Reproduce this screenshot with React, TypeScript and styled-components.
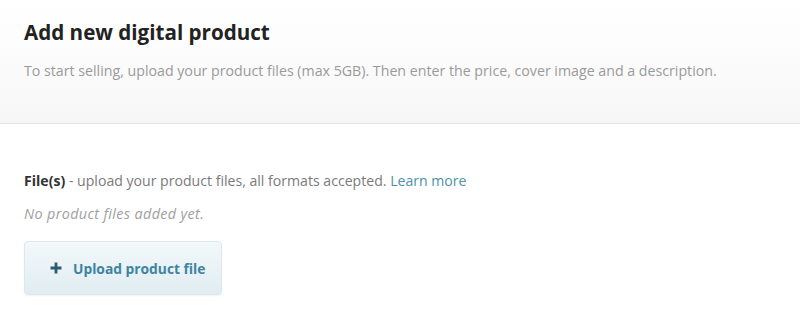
import styled, { createGlobalStyle } from 'styled-components';

const GlobalStyle = createGlobalStyle`
  html, body {
    margin: 0;
    padding: 0;
    background: #fff;
  }
  body {
    font-family: 'Open Sans', 'Lato', sans-serif;
    color: #333;
  }
`;

const Page = styled.div`
  width: 800px;
  height: 310px;
  overflow: hidden;
  background: #fff;
`;

const Header = styled.header`
  height: 124px;
  box-sizing: border-box;
  padding: 20px 24px 0;
  background: linear-gradient(to bottom, #ffffff 0%, #f7f7f7 100%);
  border-bottom: 1px solid #e3e3e3;
`;

const Title = styled.h1`
  margin: 0;
  font-size: 20.6px;
  line-height: 24px;
  font-weight: 700;
  color: #222;
`;

const Subtitle = styled.p`
  margin: 18px 0 0;
  font-size: 14.2px;
  line-height: 18px;
  color: #9a9a9a;
`;

const Section = styled.section`
  padding: 48px 24px 0;
  display: flex;
  flex-direction: column;
  align-items: flex-start;
`;

const FilesLabel = styled.p`
  margin: 0;
  font-size: 14.1px;
  line-height: 18px;
  color: #7a7a7a;
  strong {
    color: #333;
    font-weight: 700;
  }
  a {
    color: #4a93a8;
    text-decoration: none;
  }
`;

const EmptyNote = styled.p`
  margin: 15px 0 0;
  font-size: 14.4px;
  line-height: 18px;
  letter-spacing: 0.35px;
  font-style: italic;
  color: #a0a0a0;
`;

const UploadButton = styled.button`
  margin-top: 18px;
  width: 198px;
  height: 54px;
  display: flex;
  align-items: center;
  gap: 11px;
  padding: 0 0 0 25px;
  box-sizing: border-box;
  border: 1px solid #dce8ed;
  border-radius: 4px;
  background: linear-gradient(to bottom, #f2f8fa 0%, #e1edf2 100%);
  box-shadow: 0 1px 2px rgba(0, 0, 0, 0.06);
  font-family: inherit;
  font-size: 13.8px;
  font-weight: 700;
  color: #3d84a0;
  cursor: pointer;
`;

function PlusIcon() {
  return (
    <svg width="12" height="12" viewBox="0 0 12 12">
      <path d="M6 0.5v11M0.5 6h11" stroke="#2d5a6e" strokeWidth="2.8" />
    </svg>
  );
}

export default function App() {
  return (
    <Page>
      <GlobalStyle />
      <Header>
        <Title>Add new digital product</Title>
        <Subtitle>
          To start selling, upload your product files (max 5GB). Then enter the price, cover image and a
          description.
        </Subtitle>
      </Header>
      <Section>
        <FilesLabel>
          <strong>File(s)</strong> - upload your product files, all formats accepted.{' '}
          <a href="#">Learn more</a>
        </FilesLabel>
        <EmptyNote>No product files added yet.</EmptyNote>
        <UploadButton>
          <PlusIcon />
          Upload product file
        </UploadButton>
      </Section>
    </Page>
  );
}
